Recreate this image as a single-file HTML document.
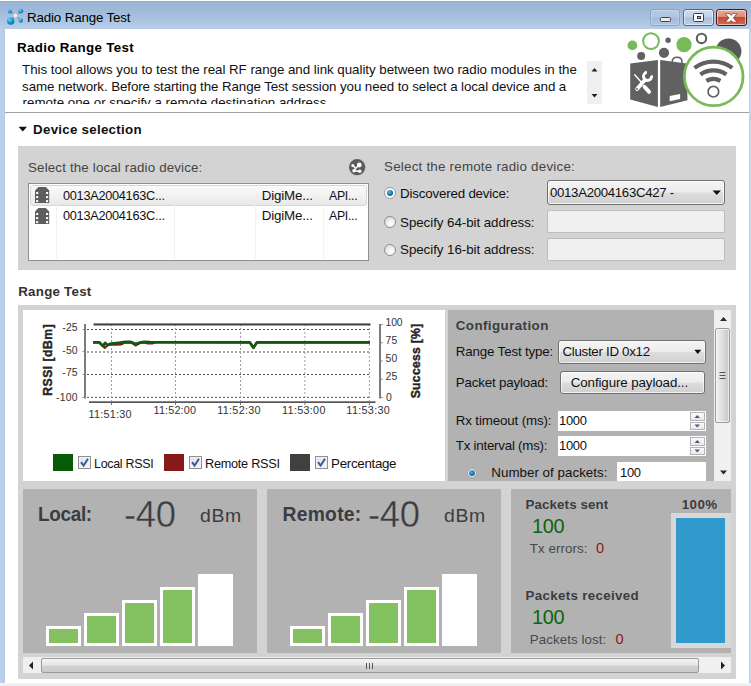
<!DOCTYPE html>
<html lang="en"><head><meta charset="utf-8"><title>Radio Range Test</title>
<style>
html,body{margin:0;padding:0;background:#fff;}
body{width:751px;height:686px;overflow:hidden;position:relative;font-family:'Liberation Sans',sans-serif;font-size:13.33px;color:#1c1c1c;}
.a{position:absolute;box-sizing:border-box;}
.t{position:absolute;white-space:pre;line-height:1;transform-origin:0 0;}
svg{position:absolute;overflow:visible;}
#titlebar{left:0;top:0;width:751px;height:29px;background:linear-gradient(#94aaca 0,#94aaca 2px,#9ab5d5 2.5px,#a0bbd9 11px,#a9c3df 19px,#b3cde9 27px,#b9cbe3 28px,#b9cbe3 29px);}
#titletop{left:0;top:0;width:751px;height:1px;background:#fbfcfe;}
#bl{left:0;top:29px;width:5px;height:657px;background:linear-gradient(90deg,#bacfea 0,#bacfea 4px,#b5c9e0 4px);}
#br{left:749px;top:29px;width:2px;height:657px;background:#c3d4ea;}
#bb{left:0;top:683px;width:751px;height:3px;background:linear-gradient(#f4f5f8,#ecedf1);}
.cap{top:9px;height:17px;border:1px solid #5a6f8c;border-radius:3px;box-shadow:inset 0 0 0 1px rgba(255,255,255,.55);}
.panel{background:#d3d3d3;}
.dark{background:#b2b2b2;}
.field{background:#f0f0f0;border:1px solid #bdbdbd;border-radius:2px;}
.btn{border:1px solid #707070;border-radius:3px;background:linear-gradient(#f4f4f4 0,#ececec 48%,#dddddd 52%,#d0d0d0 100%);box-shadow:inset 0 0 0 1px rgba(255,255,255,.7);}
.white{background:#fff;}
.sb{background:#f0f0f0;}
.thumb{border:1px solid #9a9a9a;border-radius:2px;}
</style></head>
<body>

<div class="a" id="titlebar"></div><div class="a" id="titletop"></div>
<div class="a" id="bl"></div><div class="a" id="br"></div><div class="a" id="bb"></div>
<span class="t" style="left:27.07px;top:11.02px;font-size:13.33px;letter-spacing:-0.150px;color:#000;">Radio Range Test</span>
<div class="a cap" style="left:650.4px;width:30px;border-color:#8aa3c6;background:linear-gradient(#b4c9e4 0,#afc6e2 46%,#a2bbdb 52%,#adc5e1 100%);box-shadow:inset 0 0 0 1px rgba(255,255,255,.25);"></div>
<div class="a cap" style="left:683.3px;width:30.4px;border-color:#50698f;background:linear-gradient(#cddbee 0,#c0d2ea 46%,#a9c1df 52%,#b9cde7 100%);"></div>
<div class="a cap" style="left:716.4px;width:30.8px;border-color:#431a1a;background:linear-gradient(#eaa999 0,#dd8a78 45%,#c64a33 50%,#d06c55 100%);"></div>


<span class="t" style="left:17.07px;top:40.82px;font-size:13.33px;font-weight:700;letter-spacing:0.339px;color:#000;">Radio Range Test</span>
<div class="a" style="left:18px;top:56px;width:585px;height:48px;overflow:hidden;">
<div class="a" style="left:-18px;top:-56px;width:751px;height:200px;">
<span class="t" style="left:22.07px;top:63.02px;font-size:13.33px;letter-spacing:-0.032px;color:#111;">This tool allows you to test the real RF range and link quality between two radio modules in the</span>
<span class="t" style="left:22.07px;top:79.62px;font-size:13.33px;letter-spacing:-0.091px;color:#111;">same network. Before starting the Range Test session you need to select a local device and a</span>
<span class="t" style="left:22.60px;top:96.22px;font-size:13.33px;color:#111;">remote one or specify a remote destination address.</span>
</div></div>
<div class="a sb" style="left:587px;top:61px;width:15px;height:43px;"></div>
<svg style="left:587px;top:61px" width="15" height="43"><path d="M4.5 10.5 L10.5 10.5 L7.5 7 Z M4.5 33 L10.5 33 L7.5 36.5 Z" fill="#222"/></svg>
<div class="a" style="left:5px;top:112px;width:744px;height:1px;background:#a0a0a0;"></div>


<svg style="left:18px;top:126px" width="10" height="6"><path d="M0.6 0.8 L9 0.8 L4.8 5.4 Z" fill="#111"/></svg>
<span class="t" style="left:33.07px;top:123.22px;font-size:13.33px;font-weight:700;letter-spacing:0.267px;color:#111;">Device selection</span>
<div class="a panel" style="left:18px;top:146px;width:718px;height:124.4px;"></div>
<span class="t" style="left:28.07px;top:161.02px;font-size:13.33px;letter-spacing:0.158px;color:#444;">Select the local radio device:</span>
<div class="a white" style="left:28px;top:183px;width:341px;height:77.5px;border:1px solid #8a8f98;"></div>
<div class="a" style="left:30px;top:185px;width:337px;height:20.6px;border:1px solid #d6d6d6;border-radius:3px;background:linear-gradient(#fafafa,#e9e9e9);"></div>
<div class="a" style="left:56px;top:205px;width:1px;height:54px;background:#f0f2f8;"></div>
<div class="a" style="left:174px;top:205px;width:1px;height:54px;background:#f0f2f8;"></div>
<div class="a" style="left:255px;top:205px;width:1px;height:54px;background:#f0f2f8;"></div>
<div class="a" style="left:323px;top:205px;width:1px;height:54px;background:#f0f2f8;"></div>
<span class="t" style="left:62.97px;top:188.82px;font-size:13.33px;letter-spacing:-0.300px;color:#111;transform:scaleX(0.9559);">0013A2004163C...</span>
<span class="t" style="left:261.67px;top:188.82px;font-size:13.33px;letter-spacing:-0.153px;color:#111;">DigiMe...</span>
<span class="t" style="left:329.47px;top:188.82px;font-size:13.33px;letter-spacing:-0.300px;color:#111;transform:scaleX(0.9219);">API...</span>
<span class="t" style="left:62.97px;top:209.42px;font-size:13.33px;letter-spacing:-0.300px;color:#111;transform:scaleX(0.9559);">0013A2004163C...</span>
<span class="t" style="left:261.67px;top:209.42px;font-size:13.33px;letter-spacing:-0.153px;color:#111;">DigiMe...</span>
<span class="t" style="left:329.47px;top:209.42px;font-size:13.33px;letter-spacing:-0.300px;color:#111;transform:scaleX(0.9219);">API...</span>
<span class="t" style="left:384.07px;top:160.22px;font-size:13.33px;letter-spacing:0.231px;color:#444;">Select the remote radio device:</span>
<span class="t" style="left:400.07px;top:186.82px;font-size:13.33px;letter-spacing:-0.185px;color:#111;">Discovered device:</span>
<span class="t" style="left:400.07px;top:215.62px;font-size:13.33px;letter-spacing:-0.051px;color:#111;">Specify 64-bit address:</span>
<span class="t" style="left:400.07px;top:243.12px;font-size:13.33px;letter-spacing:-0.051px;color:#111;">Specify 16-bit address:</span>
<div class="a btn" style="left:547px;top:180px;width:178px;height:25px;"></div>
<span class="t" style="left:550.27px;top:186.42px;font-size:13.33px;letter-spacing:-0.300px;color:#111;transform:scaleX(0.9899);">0013A2004163C427 -</span>
<svg style="left:712px;top:190px" width="10" height="6"><path d="M0.5 0.5 L9 0.5 L4.75 5 Z" fill="#111"/></svg>
<div class="a field" style="left:547px;top:210px;width:178px;height:23px;"></div>
<div class="a field" style="left:547px;top:238px;width:178px;height:23px;"></div>
<div class="a" style="left:384.2px;top:187.0px;width:12px;height:12px;border-radius:50%;border:1px solid #9c9c9c;background:#fbfbfb;"></div><div class="a" style="left:387.0px;top:189.8px;width:6.4px;height:6.4px;border-radius:50%;background:radial-gradient(circle at 40% 35%,#62bbe6 0,#1e7db3 45%,#0f3e61 100%);"></div><div class="a" style="left:384.2px;top:216.0px;width:12px;height:12px;border-radius:50%;border:1px solid #8e8f8f;background:radial-gradient(circle at 62% 68%,#ffffff 0,#f3f3f3 35%,#cfcfcf 100%);"></div><div class="a" style="left:384.2px;top:243.6px;width:12px;height:12px;border-radius:50%;border:1px solid #8e8f8f;background:radial-gradient(circle at 62% 68%,#ffffff 0,#f3f3f3 35%,#cfcfcf 100%);"></div>

<span class="t" style="left:18.27px;top:285.22px;font-size:13.33px;font-weight:700;letter-spacing:0.234px;color:#333;">Range Test</span>


<div class="a panel" style="left:18px;top:305px;width:718px;height:373.6px;"></div>
<div class="a white" style="left:23px;top:310px;width:422.3px;height:170.5px;"></div>
<svg style="left:0;top:0" width="751" height="686" viewBox="0 0 751 686"><line x1="87" y1="329.5" x2="371" y2="329.5" stroke="#505050" stroke-width="1" stroke-dasharray="2 2"/><line x1="87" y1="352.0" x2="371" y2="352.0" stroke="#505050" stroke-width="1" stroke-dasharray="2 2"/><line x1="87" y1="374.5" x2="371" y2="374.5" stroke="#505050" stroke-width="1" stroke-dasharray="2 2"/><line x1="87" y1="397.4" x2="371" y2="397.4" stroke="#505050" stroke-width="1" stroke-dasharray="2 2"/><line x1="111.5" y1="324" x2="111.5" y2="401" stroke="#9c9ca4" stroke-width="1" stroke-dasharray="2 2"/><line x1="111.5" y1="403" x2="111.5" y2="405" stroke="#777" stroke-width="1"/><line x1="175.5" y1="324" x2="175.5" y2="401" stroke="#9c9ca4" stroke-width="1" stroke-dasharray="2 2"/><line x1="175.5" y1="403" x2="175.5" y2="405" stroke="#777" stroke-width="1"/><line x1="240.5" y1="324" x2="240.5" y2="401" stroke="#9c9ca4" stroke-width="1" stroke-dasharray="2 2"/><line x1="240.5" y1="403" x2="240.5" y2="405" stroke="#777" stroke-width="1"/><line x1="304.9" y1="324" x2="304.9" y2="401" stroke="#9c9ca4" stroke-width="1" stroke-dasharray="2 2"/><line x1="304.9" y1="403" x2="304.9" y2="405" stroke="#777" stroke-width="1"/><line x1="369.4" y1="324" x2="369.4" y2="401" stroke="#9c9ca4" stroke-width="1" stroke-dasharray="2 2"/><line x1="369.4" y1="403" x2="369.4" y2="405" stroke="#777" stroke-width="1"/><rect x="84" y="324" width="2" height="74.5" fill="#7c7c7c"/><rect x="379" y="324" width="2" height="74.5" fill="#7c7c7c"/><rect x="89" y="401.3" width="286.5" height="1.7" fill="#555"/><line x1="82.5" y1="329.5" x2="84" y2="329.5" stroke="#999" stroke-width="1"/><line x1="82.5" y1="351.5" x2="84" y2="351.5" stroke="#999" stroke-width="1"/><line x1="82.5" y1="374.5" x2="84" y2="374.5" stroke="#999" stroke-width="1"/><line x1="82.5" y1="397.5" x2="84" y2="397.5" stroke="#999" stroke-width="1"/><line x1="381" y1="324.5" x2="383" y2="324.5" stroke="#999" stroke-width="1"/><line x1="381" y1="342.7" x2="383" y2="342.7" stroke="#999" stroke-width="1"/><line x1="381" y1="361" x2="383" y2="361" stroke="#999" stroke-width="1"/><line x1="381" y1="379.2" x2="383" y2="379.2" stroke="#999" stroke-width="1"/><line x1="381" y1="397.5" x2="383" y2="397.5" stroke="#999" stroke-width="1"/><rect x="93.5" y="323.4" width="277" height="2.1" fill="#444"/><polyline fill="none" stroke="#8b1a1a" stroke-width="2.0" stroke-linejoin="round" points="93.1,342.4 99.5,342.4 102.5,345.5 104.8,348 107.5,345.6 111,344.5 116,344.8 121.5,344.4 125,342.7 131,342.4 135.5,345.5 140,343.1 144,342.5 147.6,343.5 152,343.5 156,342.5 249.5,342.4 253.4,347.6 257,342.4 370,342.4"/><polyline fill="none" stroke="#15560f" stroke-width="2.8" stroke-linejoin="round" points="93.1,342.3 99.2,342.3 102.9,346 105.2,342.9 107.1,345 111.3,343.7 118.8,342.8 125.3,342 131,342 135.5,344.1 140,342.6 143.9,342 150,342.2 249.8,342.3 253.4,347.8 257,342.3 370,342.3"/></svg>
<span class="t" style="left:62.28px;top:323.30px;font-size:10.4px;letter-spacing:0.150px;color:#333;">-25</span>
<span class="t" style="left:62.28px;top:345.50px;font-size:10.4px;letter-spacing:0.150px;color:#333;">-50</span>
<span class="t" style="left:62.28px;top:368.40px;font-size:10.4px;letter-spacing:0.150px;color:#333;">-75</span>
<span class="t" style="left:56.08px;top:393.10px;font-size:10.4px;letter-spacing:0.245px;color:#333;">-100</span>
<span class="t" style="left:385.48px;top:318.00px;font-size:10.4px;letter-spacing:-0.106px;color:#333;">100</span>
<span class="t" style="left:385.48px;top:335.60px;font-size:10.4px;letter-spacing:0.170px;color:#333;">75</span>
<span class="t" style="left:385.48px;top:353.70px;font-size:10.4px;letter-spacing:0.170px;color:#333;">50</span>
<span class="t" style="left:385.48px;top:371.50px;font-size:10.4px;letter-spacing:0.170px;color:#333;">25</span>
<span class="t" style="left:385.90px;top:393.30px;font-size:10.4px;color:#333;">0</span>
<span class="t" style="left:88.57px;top:408.86px;font-size:10.8px;letter-spacing:0.233px;color:#333;">11:51:30</span>
<span class="t" style="left:153.57px;top:404.76px;font-size:10.8px;letter-spacing:0.161px;color:#333;">11:52:00</span>
<span class="t" style="left:217.17px;top:405.36px;font-size:10.8px;letter-spacing:0.319px;color:#333;">11:52:30</span>
<span class="t" style="left:282.07px;top:405.36px;font-size:10.8px;letter-spacing:0.304px;color:#333;">11:53:00</span>
<span class="t" style="left:346.37px;top:405.36px;font-size:10.8px;letter-spacing:0.319px;color:#333;">11:53:30</span>
<div class="a" style="left:47.4px;top:360px;width:0;height:0;transform:rotate(-90deg);"><span class="t" style="left:-35.69px;top:-5.43px;font-size:12.2px;font-weight:700;letter-spacing:0.483px;color:#262626;-webkit-text-stroke:0.4px #262626;">RSSI [dBm]</span></div>
<div class="a" style="left:415.4px;top:361.2px;width:0;height:0;transform:rotate(-90deg);"><span class="t" style="left:-37.29px;top:-5.43px;font-size:12.2px;font-weight:700;letter-spacing:0.276px;color:#262626;-webkit-text-stroke:0.4px #262626;">Success [%]</span></div>
<div class="a" style="left:53px;top:454px;width:20px;height:16.5px;background:#055c05;"></div>
<div class="a" style="left:164px;top:454px;width:20px;height:16.5px;background:#861a1a;"></div>
<div class="a" style="left:290.3px;top:454px;width:19.5px;height:16.5px;background:#404040;"></div>
<span class="t" style="left:94.17px;top:456.72px;font-size:13.33px;letter-spacing:-0.300px;color:#111;transform:scaleX(0.9340);">Local RSSI</span>
<span class="t" style="left:204.97px;top:456.72px;font-size:13.33px;letter-spacing:-0.300px;color:#111;transform:scaleX(0.9565);">Remote RSSI</span>
<span class="t" style="left:331.07px;top:456.72px;font-size:13.33px;letter-spacing:-0.300px;color:#111;">Percentage</span>
<div class="a" style="left:78px;top:456px;width:13px;height:13px;border:1px solid #8e8f8f;background:linear-gradient(135deg,#dfe3e6,#f6f6f6);box-shadow:inset 0 0 0 1px #f4f4f4;"></div><svg style="left:78px;top:456px" width="13" height="13"><path d="M3 6.2 L5.6 9.6 L10 2.8" fill="none" stroke="#3a55a0" stroke-width="1.9"/></svg><div class="a" style="left:189px;top:456px;width:13px;height:13px;border:1px solid #8e8f8f;background:linear-gradient(135deg,#dfe3e6,#f6f6f6);box-shadow:inset 0 0 0 1px #f4f4f4;"></div><svg style="left:189px;top:456px" width="13" height="13"><path d="M3 6.2 L5.6 9.6 L10 2.8" fill="none" stroke="#3a55a0" stroke-width="1.9"/></svg><div class="a" style="left:315.3px;top:456px;width:13px;height:13px;border:1px solid #8e8f8f;background:linear-gradient(135deg,#dfe3e6,#f6f6f6);box-shadow:inset 0 0 0 1px #f4f4f4;"></div><svg style="left:315.3px;top:456px" width="13" height="13"><path d="M3 6.2 L5.6 9.6 L10 2.8" fill="none" stroke="#3a55a0" stroke-width="1.9"/></svg>

<div class="a dark" style="left:448.3px;top:310px;width:266px;height:170.5px;"></div>
<div class="a sb" style="left:714px;top:310px;width:16.5px;height:170.5px;"></div>
<div class="a thumb" style="left:715.2px;top:328px;width:14.6px;height:94.8px;box-shadow:inset 0 0 0 1px rgba(255,255,255,.6);background:linear-gradient(90deg,#efefef,#e2e2e2 40%,#c6c6c6);"></div>
<svg style="left:714px;top:310px" width="17" height="171"><path d="M6 11 L13 11 L9.5 7 Z M6 160.5 L13 160.5 L9.5 164.5 Z" fill="#2a2a2a"/><path d="M5.5 62.5h6M5.5 65.5h6M5.5 68.5h6" stroke="#555" stroke-width="1"/></svg>
<span class="t" style="left:455.77px;top:319.22px;font-size:13.33px;font-weight:700;letter-spacing:0.434px;color:#3a3c41;">Configuration</span>
<span class="t" style="left:455.77px;top:344.82px;font-size:13.33px;letter-spacing:-0.148px;color:#111;">Range Test type:</span>
<div class="a btn" style="left:558px;top:339.5px;width:148px;height:24px;"></div>
<span class="t" style="left:562.47px;top:345.02px;font-size:13.33px;letter-spacing:-0.300px;color:#111;">Cluster ID 0x12</span>
<svg style="left:694px;top:349px" width="8" height="6"><path d="M0.3 0.8 L7.3 0.8 L3.8 5 Z" fill="#111"/></svg>
<span class="t" style="left:455.77px;top:375.72px;font-size:13.33px;letter-spacing:-0.163px;color:#111;">Packet payload:</span>
<div class="a btn" style="left:559.5px;top:371px;width:145px;height:23px;"></div>
<span class="t" style="left:570.77px;top:375.82px;font-size:13.33px;letter-spacing:-0.102px;color:#111;">Configure payload...</span>
<span class="t" style="left:455.77px;top:413.82px;font-size:13.33px;letter-spacing:-0.132px;color:#111;">Rx timeout (ms):</span>
<div class="a white" style="left:557.8px;top:411px;width:148px;height:20px;"></div>
<span class="t" style="left:559.27px;top:414.02px;font-size:13.33px;letter-spacing:-0.300px;color:#111;transform:scaleX(0.9725);">1000</span>
<div class="a" style="left:690.4px;top:412.2px;width:14.5px;height:9px;border:1px solid #b4b4b4;background:linear-gradient(#fbfbfb,#e9e9e9);"></div><div class="a" style="left:690.4px;top:421.7px;width:14.5px;height:8.5px;border:1px solid #b4b4b4;background:linear-gradient(#fbfbfb,#e9e9e9);"></div><svg style="left:690.4px;top:412.2px" width="15" height="18"><path d="M4.5 6 L10 6 L7.25 3 Z M4.5 12.5 L10 12.5 L7.25 15.5 Z" fill="#4a5a8a"/></svg>
<span class="t" style="left:455.77px;top:438.92px;font-size:13.33px;letter-spacing:-0.235px;color:#111;">Tx interval (ms):</span>
<div class="a white" style="left:557.8px;top:435.7px;width:148px;height:20px;"></div>
<span class="t" style="left:559.27px;top:439.12px;font-size:13.33px;letter-spacing:-0.300px;color:#111;transform:scaleX(0.9725);">1000</span>
<div class="a" style="left:690.4px;top:437px;width:14.5px;height:9px;border:1px solid #b4b4b4;background:linear-gradient(#fbfbfb,#e9e9e9);"></div><div class="a" style="left:690.4px;top:446.5px;width:14.5px;height:8.5px;border:1px solid #b4b4b4;background:linear-gradient(#fbfbfb,#e9e9e9);"></div><svg style="left:690.4px;top:437px" width="15" height="18"><path d="M4.5 6 L10 6 L7.25 3 Z M4.5 12.5 L10 12.5 L7.25 15.5 Z" fill="#4a5a8a"/></svg>
<div class="a" style="left:448.3px;top:458px;width:266px;height:22.5px;overflow:hidden;">
<div class="a" style="left:-448.3px;top:-458px;width:751px;height:686px;">
<div class="a" style="left:466.7px;top:467.6px;width:10.4px;height:10.4px;border-radius:50%;border:1px solid #9c9c9c;background:#fbfbfb;"></div><div class="a" style="left:468.7px;top:469.6px;width:6.4px;height:6.4px;border-radius:50%;background:radial-gradient(circle at 40% 35%,#62bbe6 0,#1e7db3 45%,#0f3e61 100%);"></div>
<span class="t" style="left:491.27px;top:465.52px;font-size:13.33px;letter-spacing:0.036px;color:#111;">Number of packets:</span>
<div class="a white" style="left:616.5px;top:461.7px;width:89.5px;height:22px;"></div>
<span class="t" style="left:620.47px;top:465.72px;font-size:13.33px;letter-spacing:-0.300px;color:#111;transform:scaleX(0.9730);">100</span>
</div></div>


<div class="a dark" style="left:23px;top:489px;width:234px;height:163.6px;"></div>
<div class="a dark" style="left:267px;top:489px;width:234.2px;height:163.6px;"></div>
<div class="a dark" style="left:511.2px;top:489px;width:219.5px;height:163.6px;"></div>
<span class="t" style="left:38.13px;top:505.26px;font-size:19.3px;font-weight:700;letter-spacing:-0.300px;color:#3a3c41;transform:scaleX(0.9794);">Local:</span>
<span class="t" style="left:123.72px;top:496.48px;font-size:37px;letter-spacing:-0.300px;color:#3a3c41;transform:scaleX(0.9844);-webkit-text-stroke:0.45px #b2b2b2;">-40</span>
<span class="t" style="left:200.20px;top:507.90px;font-size:17.6px;letter-spacing:0.600px;color:#3a3c41;transform:scaleX(1.1049);">dBm</span>
<div class="a" style="left:46.4px;top:626.4px;width:34.3px;height:20px;background:#84c261;border:3px solid #fff;"></div><div class="a" style="left:84.4px;top:613.4px;width:34.3px;height:33px;background:#84c261;border:3px solid #fff;"></div><div class="a" style="left:122.4px;top:600.4px;width:34.3px;height:46px;background:#84c261;border:3px solid #fff;"></div><div class="a" style="left:160.4px;top:587.4px;width:34.3px;height:59px;background:#84c261;border:3px solid #fff;"></div><div class="a" style="left:198.4px;top:574.4px;width:34.3px;height:72px;background:#fff;border:3px solid #fff;"></div>
<span class="t" style="left:282.53px;top:505.26px;font-size:19.3px;font-weight:700;letter-spacing:0.267px;color:#3a3c41;">Remote:</span>
<span class="t" style="left:368.02px;top:496.48px;font-size:37px;letter-spacing:-0.300px;color:#3a3c41;transform:scaleX(0.9844);-webkit-text-stroke:0.45px #b2b2b2;">-40</span>
<span class="t" style="left:444.40px;top:507.90px;font-size:17.6px;letter-spacing:0.600px;color:#3a3c41;transform:scaleX(1.1049);">dBm</span>
<div class="a" style="left:290.3px;top:626.4px;width:34.3px;height:20px;background:#84c261;border:3px solid #fff;"></div><div class="a" style="left:328.3px;top:613.4px;width:34.3px;height:33px;background:#84c261;border:3px solid #fff;"></div><div class="a" style="left:366.3px;top:600.4px;width:34.3px;height:46px;background:#84c261;border:3px solid #fff;"></div><div class="a" style="left:404.3px;top:587.4px;width:34.3px;height:59px;background:#84c261;border:3px solid #fff;"></div><div class="a" style="left:442.3px;top:574.4px;width:34.3px;height:72px;background:#fff;border:3px solid #fff;"></div>
<span class="t" style="left:525.47px;top:497.92px;font-size:13.33px;font-weight:700;letter-spacing:0.115px;color:#3a3c41;">Packets sent</span>
<span class="t" style="left:532.18px;top:516.15px;font-size:20.5px;letter-spacing:-0.300px;color:#0b650b;transform:scaleX(0.9709);">100</span>
<span class="t" style="left:529.77px;top:541.82px;font-size:13.33px;letter-spacing:0.083px;color:#484848;">Tx errors:</span>
<span class="t" style="left:596.00px;top:540.94px;font-size:14.6px;color:#8b1a1a;">0</span>
<span class="t" style="left:525.47px;top:589.22px;font-size:13.33px;font-weight:700;letter-spacing:0.325px;color:#3a3c41;">Packets received</span>
<span class="t" style="left:532.18px;top:607.45px;font-size:20.5px;letter-spacing:-0.300px;color:#0b650b;transform:scaleX(0.9709);">100</span>
<span class="t" style="left:529.77px;top:632.52px;font-size:13.33px;letter-spacing:0.067px;color:#484848;">Packets lost:</span>
<span class="t" style="left:615.60px;top:631.74px;font-size:14.6px;color:#8b1a1a;">0</span>
<span class="t" style="left:681.67px;top:497.52px;font-size:13.33px;font-weight:700;letter-spacing:0.458px;color:#3a3c41;">100%</span>
<div class="a" style="left:671px;top:513px;width:59.7px;height:134.8px;background:#d8d8d8;"></div>
<div class="a" style="left:676px;top:517.8px;width:49.1px;height:124.8px;background:#3299cc;"></div>
<div class="a sb" style="left:23px;top:656.8px;width:707.7px;height:16.7px;"></div>
<div class="a thumb" style="left:41.3px;top:658.4px;width:658px;height:14.2px;background:linear-gradient(#f4f4f4,#e6e6e6 45%,#d2d2d2 55%,#cacaca);"></div>
<svg style="left:23px;top:656.5px" width="708" height="17"><path d="M10 4.5 L10 12.5 L6 8.5 Z M698 4.5 L698 12.5 L702 8.5 Z" fill="#222"/><path d="M343.5 6v6M346.5 6v6M349.5 6v6" stroke="#555" stroke-width="1"/></svg>


<svg style="left:0;top:0" width="751" height="120" viewBox="0 0 751 120">
<circle cx="728.5" cy="51.3" r="12.9" fill="#585858"/>
<circle cx="632.4" cy="45.4" r="4.9" fill="#77bb58"/>
<circle cx="651" cy="41.1" r="7.9" fill="none" stroke="#77bb58" stroke-width="2"/>
<circle cx="668.1" cy="40.2" r="2.7" fill="#616161"/>
<circle cx="664" cy="52.8" r="5.1" fill="#616161"/>
<circle cx="641.2" cy="55.9" r="4" fill="#616161"/>
<circle cx="684" cy="44.7" r="7.6" fill="#77bb58"/>
<circle cx="701.5" cy="38.4" r="4.7" fill="#fff" stroke="#616161" stroke-width="2.1"/>
<path d="M672.2 62.5 L672.2 61.6 Q672.4 57.3 677.1 57.3 Q681.8 57.3 682 61.6 L682 63.5" fill="#fff" stroke="#616161" stroke-width="1.5"/>
<path d="M630.2 63.5 L657.9 60.1 L657.9 106.9 L630.2 99.6 Z" fill="#616161"/>
<path d="M660.2 60.1 L686.5 63.6 L687.5 100.2 L660.2 106.9 Z" fill="#616161"/>
<path d="M669.7 95.9 L680.1 94.1 L680.1 99 L669.7 101.2 Z" fill="#fff"/>
<g fill="none" stroke="#fff" stroke-linecap="round">
<path d="M634.7 74.8 L641.6 82.5" stroke-width="1.4"/>
<path d="M644.5 86.7 L649.1 91.9" stroke-width="3.9"/>
<path d="M637.1 89 L644.8 80" stroke-width="3.8"/>
<path d="M651.6 75.6 A4.1 4.1 0 1 1 646.9 72.3" stroke-width="2.9" stroke-linecap="butt"/>
</g>
<circle cx="636.9" cy="89" r="0.95" fill="#616161"/>
<circle cx="713.7" cy="76.4" r="29.3" fill="#fff" stroke="#77bb58" stroke-width="2.8"/>
<g fill="none" stroke="#616161" stroke-width="4.2">
<path d="M694.50 67.92 A31.4 31.4 0 0 1 732.30 67.92"/>
<path d="M700.44 74.49 A22.6 22.6 0 0 1 726.36 74.49"/>
<path d="M706.40 80.88 A14 14 0 0 1 720.40 80.88"/>
</g>
<circle cx="713.4" cy="91.7" r="5.3" fill="#fff" stroke="#616161" stroke-width="1.7"/>
</svg>


<svg style="left:0;top:0" width="40" height="29" viewBox="0 0 40 29">
<defs><radialGradient id="bl1" cx="35%" cy="30%" r="75%"><stop offset="0" stop-color="#7fd6f2"/><stop offset=".45" stop-color="#1d9fd6"/><stop offset="1" stop-color="#0c6fa8"/></radialGradient></defs>
<g stroke="#9a9fa6" stroke-width="1.3"><path d="M15.4 15.4 L9.9 11.5M15.4 15.4 L20.8 11.2M15.4 15.4 L10.7 21.3M15.4 15.4 L20.8 20.5"/></g>
<circle cx="15.4" cy="15.4" r="2" fill="#eef1f4"/>
<circle cx="9.9" cy="11.5" r="2" fill="url(#bl1)"/>
<circle cx="20.8" cy="11.2" r="2.4" fill="url(#bl1)"/>
<circle cx="10.7" cy="21.2" r="3.6" fill="url(#bl1)"/>
<circle cx="20.8" cy="20.5" r="2.2" fill="url(#bl1)"/>
</svg>
<div class="a" style="left:660px;top:17px;width:11px;height:5px;background:#ece9e6;border:1px solid #444;border-radius:1.5px;"></div>
<div class="a" style="left:693.3px;top:13.2px;width:10.7px;height:8.4px;background:#fafafa;border:1px solid #3c3c3c;border-radius:1.5px;"></div>
<div class="a" style="left:696.5px;top:16px;width:4.6px;height:2.8px;background:#aab4c4;border:1px solid #3c3c3c;"></div>
<svg style="left:716.4px;top:9px;overflow:hidden" width="31" height="17" viewBox="0 0 31 17"><svg x="8" y="4.6" width="14" height="8.6" viewBox="8 4.6 14 8.6" style="overflow:hidden"><g stroke="#6b4a4a" stroke-width="4.1"><line x1="10.1" y1="3" x2="20.2" y2="14.8"/><line x1="20.2" y1="3" x2="10.1" y2="14.8"/></g></svg><svg x="8" y="5" width="14" height="7.8" viewBox="8 5 14 7.8" style="overflow:hidden"><g stroke="#fff" stroke-width="2.7"><line x1="10.1" y1="3" x2="20.2" y2="14.8"/><line x1="20.2" y1="3" x2="10.1" y2="14.8"/></g></svg></svg>
<svg style="left:35px;top:187px" width="15" height="16" viewBox="0 0 15 16"><path d="M3.4 0 L10.8 0 L14.2 3.6 L14.2 16 L0 16 L0 3.6 Z" fill="#5e5e5e"/><rect x="1.1" y="5" width="2.1" height="2" fill="#fff"/><rect x="11" y="5" width="2.1" height="2" fill="#fff"/><rect x="1.1" y="9.1" width="2.1" height="2" fill="#fff"/><rect x="11" y="9.1" width="2.1" height="2" fill="#fff"/><rect x="1.1" y="13.1" width="2.1" height="2" fill="#fff"/><rect x="11" y="13.1" width="2.1" height="2" fill="#fff"/></svg><svg style="left:35px;top:208px" width="15" height="16" viewBox="0 0 15 16"><path d="M3.4 0 L10.8 0 L14.2 3.6 L14.2 16 L0 16 L0 3.6 Z" fill="#5e5e5e"/><rect x="1.1" y="5" width="2.1" height="2" fill="#fff"/><rect x="11" y="5" width="2.1" height="2" fill="#fff"/><rect x="1.1" y="9.1" width="2.1" height="2" fill="#fff"/><rect x="11" y="9.1" width="2.1" height="2" fill="#fff"/><rect x="1.1" y="13.1" width="2.1" height="2" fill="#fff"/><rect x="11" y="13.1" width="2.1" height="2" fill="#fff"/></svg>
<svg style="left:348.9px;top:158.7px" width="17" height="17" viewBox="0 0 17 17">
<circle cx="8.15" cy="8.15" r="8.15" fill="#5b5b5b"/>
<g stroke="#fff" stroke-width="1.4" fill="none"><path d="M3.8 6.5 L6.6 9.3 L5 11.8 L10.8 12.2"/><path d="M6.6 9.3 L10.3 6"/></g>
<circle cx="10.3" cy="6" r="2.4" fill="#fff"/><circle cx="3.8" cy="6.5" r="1.5" fill="#fff"/><circle cx="5" cy="11.8" r="1.7" fill="#fff"/><circle cx="10.8" cy="12.2" r="1.7" fill="#fff"/>
</svg>

</body></html>
